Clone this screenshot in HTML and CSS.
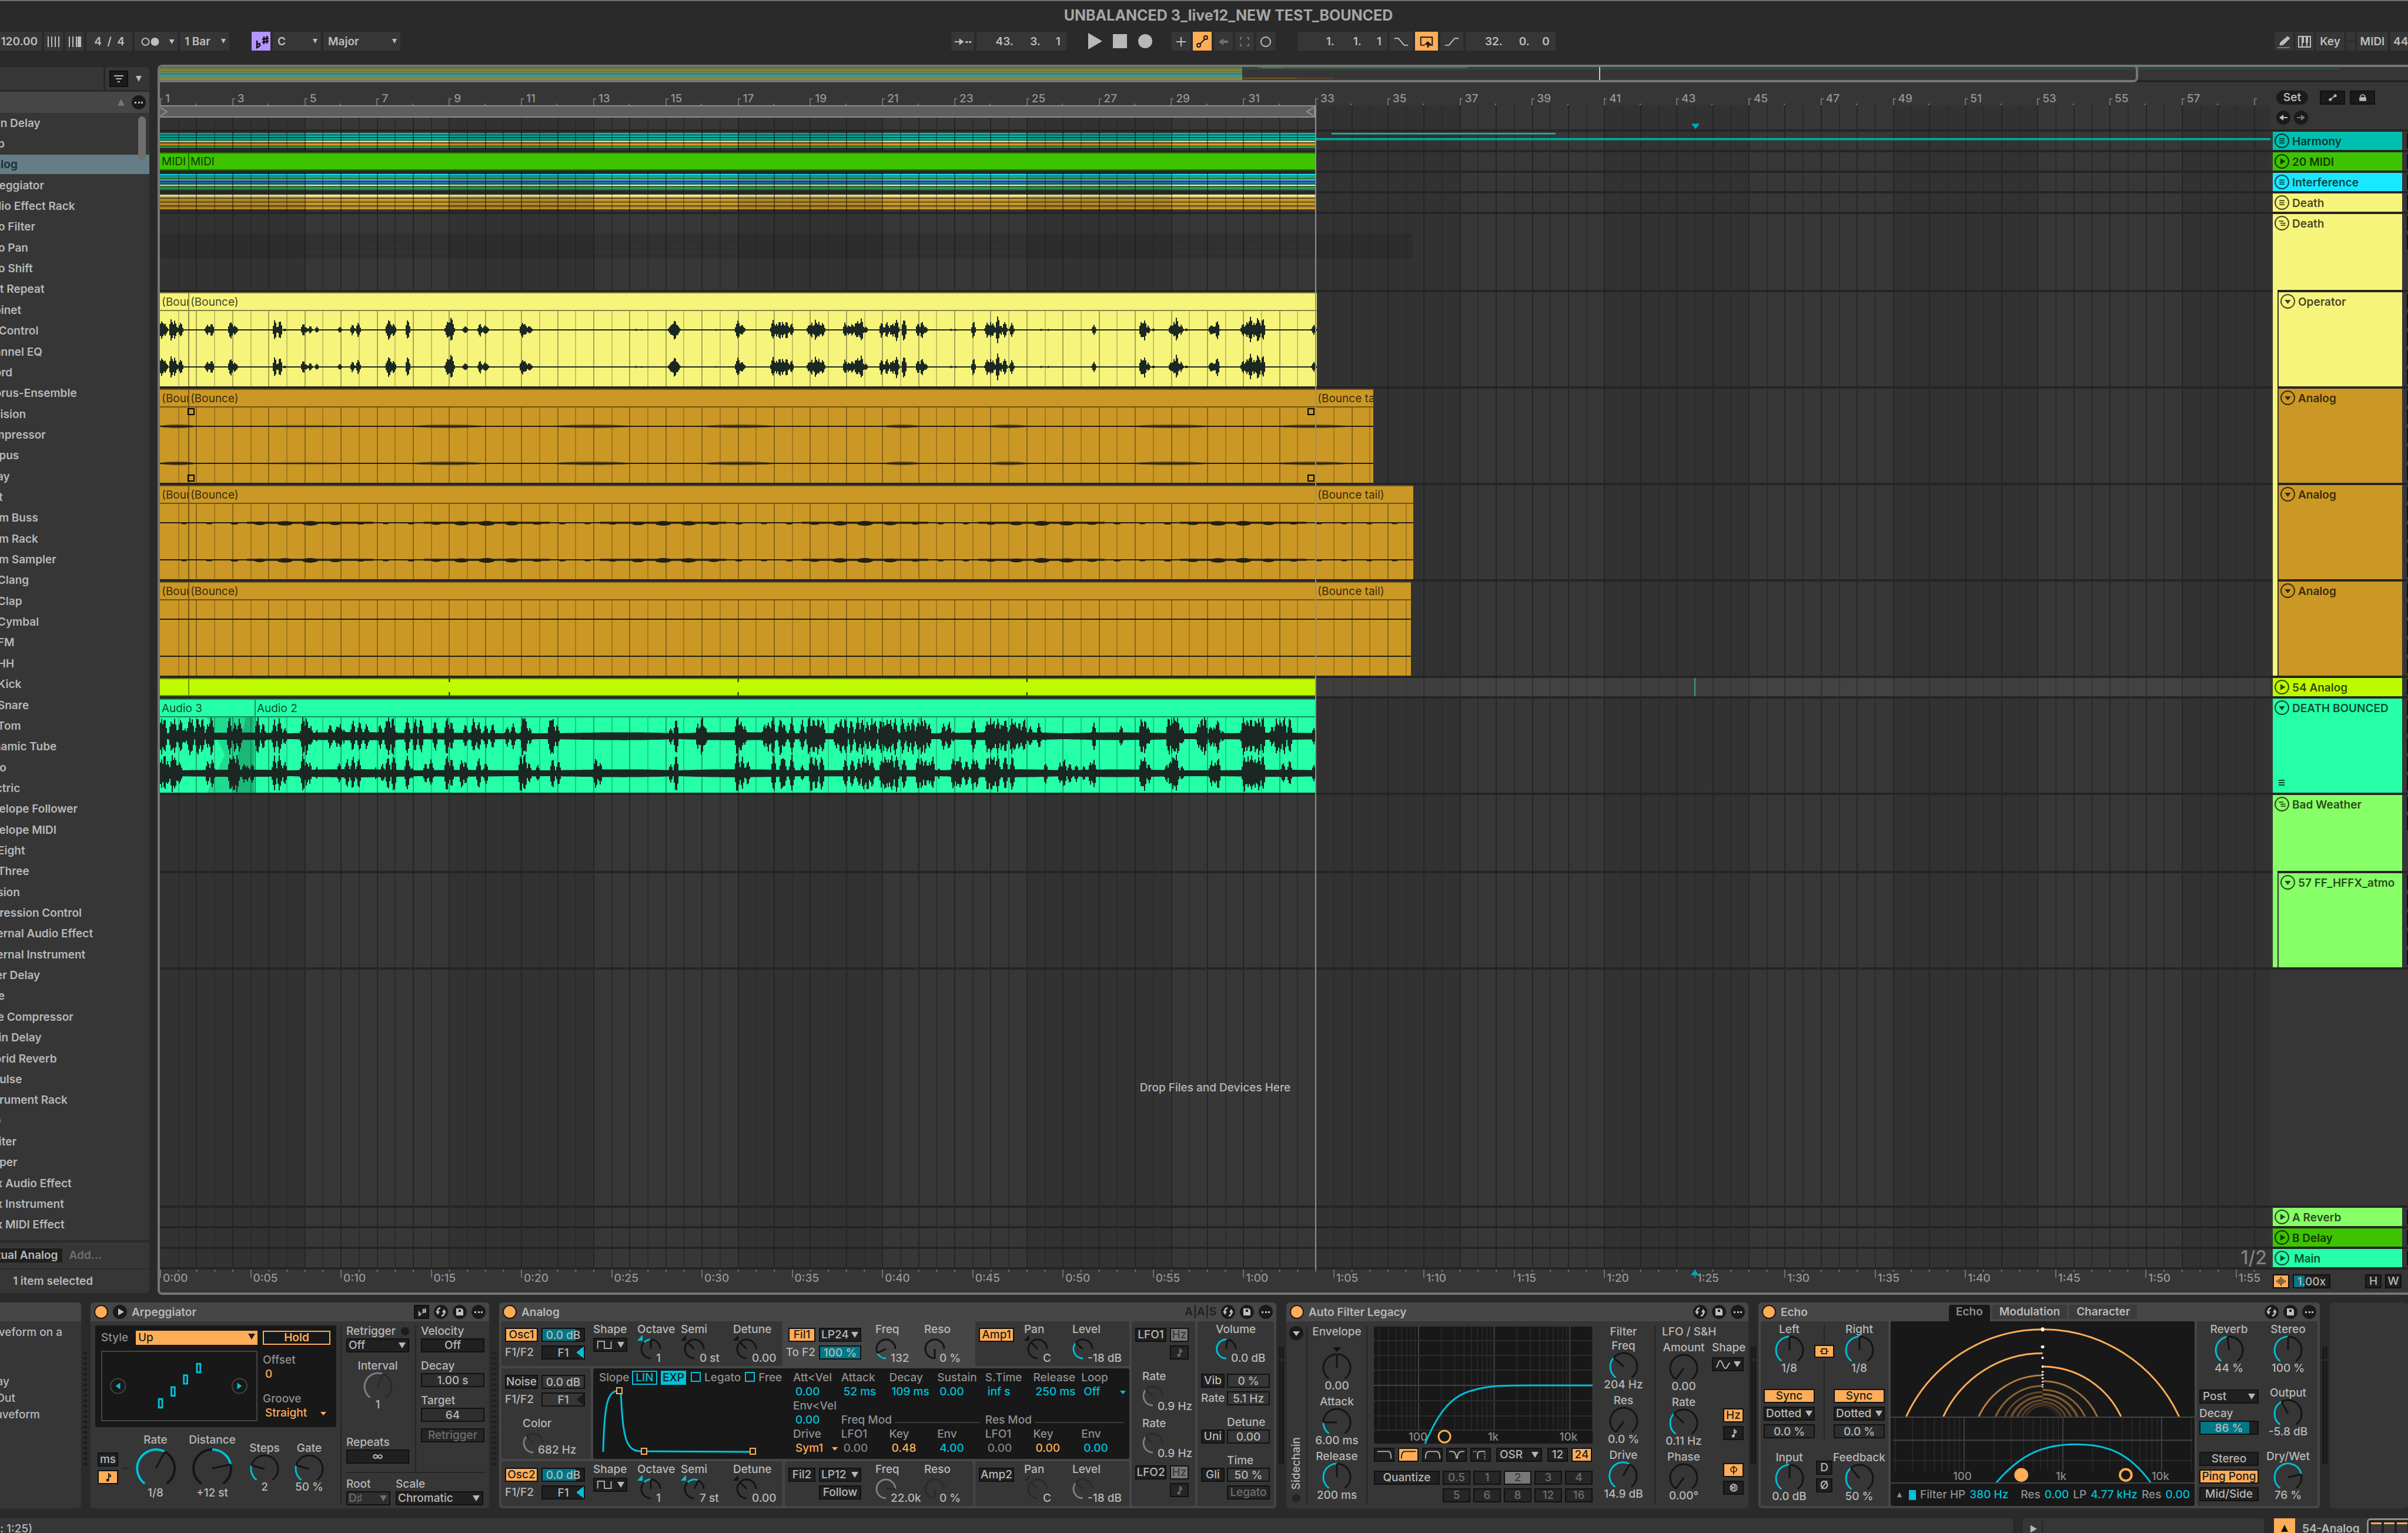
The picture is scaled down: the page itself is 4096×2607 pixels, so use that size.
FILE: index.html
```html
<!DOCTYPE html>
<html lang="en">
<head>
<meta charset="utf-8">
<title>UNBALANCED 3_live12_NEW TEST_BOUNCED</title>
<link rel="stylesheet" href="styles.css">
</head>
<body>
<svg class="defs" aria-hidden="true">
  <symbol id="i-lines" viewBox="0 0 24 24"><path d="M7 8h10M7 12h10M7 16h10" stroke="currentColor" stroke-width="2"/></symbol>
  <symbol id="i-group" viewBox="0 0 24 24"><path d="M6 8h9M9 12h10M10 16h9" stroke="currentColor" stroke-width="2"/></symbol>
  <symbol id="i-right" viewBox="0 0 24 24"><path d="M9 6l10 6-10 6z" fill="currentColor"/></symbol>
  <symbol id="i-down" viewBox="0 0 24 24"><path d="M6 9h12l-6 8z" fill="currentColor"/></symbol>
  <symbol id="i-swap" viewBox="0 0 24 24"><path d="M11 5a7 7 0 0 0-5 8M13 19a7 7 0 0 0 5-8" fill="none" stroke="currentColor" stroke-width="2.5"/><path d="M3 11h7l-3 6zM21 13h-7l3-6z" fill="currentColor"/></symbol>
  <symbol id="i-save" viewBox="0 0 24 24"><path d="M6 6h9l3 3v9H6z" fill="currentColor"/><path d="M10 8h4v4h-4z" fill="#1c1c1c"/></symbol>
  <symbol id="i-more" viewBox="0 0 24 24"><path d="M5 11h3v3H5zM11 11h3v3h-3zM16 11h3v3h-3z" fill="currentColor"/></symbol>
  <symbol id="i-scale" viewBox="0 0 32 32"><path d="M9 14v12c7-3 7-9 0-6M18 12l11-2M18 17l11-2M21 7v13M26 6v13" fill="none" stroke="currentColor" stroke-width="2.5"/></symbol>
  <symbol id="i-note" viewBox="0 0 24 24"><path d="M13 18V5l4 3v3M13 9l4 3" fill="none" stroke="currentColor" stroke-width="2"/><circle cx="11" cy="18" r="3" fill="currentColor"/></symbol>
  <symbol id="i-square" viewBox="0 0 32 20"><path d="M2 17V3h13v14h13V3" fill="none" stroke="currentColor" stroke-width="2"/></symbol>
</svg>

<header class="titlebar"><h1>UNBALANCED 3_live12_NEW TEST_BOUNCED</h1></header>

<nav class="transport">
  <div class="bar bar-left">
    <input class="tb w-tempo" aria-label="Tempo" value="120.00">
    <button class="tb w-s" aria-label="Nudge down"><svg viewBox="0 0 32 32"><path d="M7 7v18M13 7v18M19 7v18M25 7v18" stroke="currentColor" stroke-width="2"/></svg></button>
    <button class="tb w-s" aria-label="Nudge up"><svg viewBox="0 0 32 32"><path d="M7 7v18M13 7v18M19 7v18M24 7v18" stroke="currentColor" stroke-width="2"/><path d="M22 7v18M26 7v18" stroke="currentColor" stroke-width="2"/></svg></button>
    <button class="tb w-sig">4 &nbsp;/ &nbsp;4</button>
    <button class="tb w-met" aria-label="Metronome"><svg class="wide" viewBox="0 0 72 32"><circle cx="18" cy="16" r="6" fill="none" stroke="currentColor" stroke-width="2"/><circle cx="34" cy="16" r="7" fill="currentColor"/><path d="M58 12h9l-4 8z" fill="currentColor"/></svg></button>
    <span class="sel tb-sel w-bar"><select aria-label="Quantization"><option>1 Bar</option></select></span>
    <button class="tb w-s violet" aria-label="Scale mode"><svg viewBox="0 0 32 32"><use href="#i-scale"/></svg></button>
    <span class="sel tb-sel w-root"><select aria-label="Root"><option>C</option></select></span>
    <span class="sel tb-sel w-scale"><select aria-label="Scale"><option>Major</option></select></span>
  </div>
  <div class="bar bar-mid">
    <button class="tb w-m" aria-label="Follow"><svg viewBox="0 0 40 32"><path d="M6 15h8v-5l8 6-8 6v-5H6zM25 15h4v3h-4zM31 15h4v3h-4z" fill="currentColor"/></svg></button>
    <button class="tb w-pos"><span>43.</span><span>3.</span><span>1</span></button>
    <span class="runs">
      <button class="bare" aria-label="Play"><svg viewBox="0 0 28 32"><path d="M3 2v28l24-14z" fill="currentColor"/></svg></button>
      <button class="bare" aria-label="Stop"><svg viewBox="0 0 28 32"><path d="M2 4h24v24H2z" fill="currentColor"/></svg></button>
      <button class="bare" aria-label="Record"><svg viewBox="0 0 28 32"><circle cx="14" cy="16" r="12" fill="currentColor"/></svg></button>
    </span>
    <button class="tb w-s" aria-label="Overdub"><svg viewBox="0 0 32 32"><path d="M16 8v16M8 16h16" stroke="currentColor" stroke-width="2"/></svg></button>
    <button class="tb w-s orange" aria-label="Automation arm"><svg viewBox="0 0 32 32"><path d="M12 20l9-9" stroke="currentColor" stroke-width="2"/><g fill="none" stroke="currentColor" stroke-width="2"><circle cx="10" cy="22" r="3"/><circle cx="22" cy="9" r="3"/></g></svg></button>
    <button class="tb w-s faint" aria-label="Re-enable automation"><svg viewBox="0 0 32 32"><path d="M8 16l8-6v4h8v4h-8v4z" fill="currentColor"/></svg></button>
    <button class="tb w-s faint" aria-label="Capture MIDI"><svg viewBox="0 0 32 32"><path d="M12 9H9v4M20 9h3v4M12 23H9v-4M20 23h3v-4" fill="none" stroke="currentColor" stroke-width="2"/></svg></button>
    <button class="tb w-s" aria-label="Session record"><svg viewBox="0 0 32 32"><circle cx="16" cy="16" r="8" fill="none" stroke="currentColor" stroke-width="2"/></svg></button>
    <button class="tb w-pos gap-l"><span>1.</span><span>1.</span><span>1</span></button>
    <button class="tb w-m" aria-label="Punch in"><svg viewBox="0 0 40 32"><path d="M8 10h7l10 12h7" fill="none" stroke="currentColor" stroke-width="2"/></svg></button>
    <button class="tb w-m orange" aria-label="Loop"><svg viewBox="0 0 40 32"><path d="M17 22h-7V8h20v14h-6" fill="none" stroke="currentColor" stroke-width="2"/><path d="M22 15l7 6h-5v5h-3v-5h-5z" fill="currentColor"/></svg></button>
    <button class="tb w-m" aria-label="Punch out"><svg viewBox="0 0 40 32"><path d="M8 22h7l10-12h7" fill="none" stroke="currentColor" stroke-width="2"/></svg></button>
    <button class="tb w-pos"><span>32.</span><span>0.</span><span>0</span></button>
  </div>
  <div class="bar bar-right">
    <button class="tb w-s" aria-label="Draw mode"><svg viewBox="0 0 32 32"><path d="M5 26h21M9 22l1-5L22 7l4 3-11 11z" fill="currentColor" stroke="currentColor" stroke-width="1"/></svg></button>
    <button class="tb w-s" aria-label="Computer keyboard"><svg viewBox="0 0 32 32"><path d="M6 7h20v18H6zM12 7v18M20 7v18" fill="none" stroke="currentColor" stroke-width="2"/><path d="M11 7h4v11h-4zM18 7h4v11h-4z" fill="currentColor"/></svg></button>
    <button class="tb w-key">Key</button>
    <span class="tb w-io"></span>
    <button class="tb w-midi">MIDI</button>
    <span class="tb w-rate">44.1</span>
  </div>
</nav>

<main class="work">
  <aside class="browser">
    <div class="search"><span class="field"></span><button class="filter" aria-label="Filters"><svg viewBox="0 0 24 24"><path d="M4 7h16M7 12h10M10 17h4" stroke="currentColor" stroke-width="2"/></svg></button><svg class="tri" viewBox="0 0 24 24"><path d="M6 6h12l-6 12z" fill="currentColor"/></svg></div>
    <div class="colhead"><svg class="tri" viewBox="0 0 24 24"><path d="M5 19h14L12 5z" fill="#777"/></svg><button class="round" aria-label="Options"><svg><use href="#i-more"/></svg></button></div>
    <div class="listwrap">
      <ul class="list">
        <li>Align Delay</li><li>Amp</li><li class="on">Analog</li><li>Arpeggiator</li><li>Audio Effect Rack</li><li>Auto Filter</li><li>Auto Pan</li><li>Auto Shift</li><li>Beat Repeat</li><li>Cabinet</li><li>CC Control</li><li>Channel EQ</li><li>Chord</li><li>Chorus-Ensemble</li><li>Collision</li><li>Compressor</li><li>Corpus</li><li>Delay</li><li>Drift</li><li>Drum Buss</li><li>Drum Rack</li><li>Drum Sampler</li><li>DS Clang</li><li>DS Clap</li><li>DS Cymbal</li><li>DS FM</li><li>DS HH</li><li>DS Kick</li><li>DS Snare</li><li>DS Tom</li><li>Dynamic Tube</li><li>Echo</li><li>Electric</li><li>Envelope Follower</li><li>Envelope MIDI</li><li>EQ Eight</li><li>EQ Three</li><li>Erosion</li><li>Expression Control</li><li>External Audio Effect</li><li>External Instrument</li><li>Filter Delay</li><li>Gate</li><li>Glue Compressor</li><li>Grain Delay</li><li>Hybrid Reverb</li><li>Impulse</li><li>Instrument Rack</li><li>LFO</li><li>Limiter</li><li>Looper</li><li>Max Audio Effect</li><li>Max Instrument</li><li>Max MIDI Effect</li>
      </ul>
      <span class="thumb"></span>
    </div>
    <div class="tags"><span class="tag">Virtual Analog</span><span class="add">Add...</span></div>
    <div class="status">1 item selected</div>
  </aside>

  <section class="arranger">
    <div class="overview"><svg id="overview" viewBox="0 0 3824 12" preserveAspectRatio="none"></svg><span class="frame"></span></div>
    <div class="row ruler-row">
      <div class="ruler" id="bars"></div>
      <div class="side tools"><button class="pill">Set</button><button class="flat" aria-label="Automation"><svg viewBox="0 0 24 24"><path d="M7 16l10-8" stroke="currentColor" stroke-width="2"/><circle cx="7" cy="16" r="3" fill="currentColor"/><circle cx="17" cy="8" r="3" fill="currentColor"/></svg></button><button class="flat" aria-label="Lock"><svg viewBox="0 0 24 24"><path d="M5 11h14v8H5z" fill="currentColor"/><path d="M8 11V8q4-4 8 0v3" fill="none" stroke="currentColor" stroke-width="2"/></svg></button></div>
    </div>
    <div class="board">
      <svg class="grid" id="grid" preserveAspectRatio="none"></svg>
      <div class="row scrub">
        <div class="lane"><div class="loop"><svg viewBox="0 0 16 16"><path d="M1 1l11 7-11 7" fill="none" stroke="currentColor" stroke-width="2"/></svg><svg viewBox="0 0 16 16"><path d="M15 1L4 8l11 7" fill="none" stroke="currentColor" stroke-width="2"/></svg></div><svg class="mark" viewBox="0 0 12 8"><path d="M0 0h12L6 8z" fill="currentColor"/></svg></div>
        <div class="side arrows"><button class="round" aria-label="Previous locator"><svg viewBox="0 0 24 24"><path d="M5 12l7-5v4h7v2h-7v4z" fill="currentColor"/></svg></button><button class="round faint" aria-label="Next locator"><svg viewBox="0 0 24 24"><path d="M19 12l-7-5v4H5v2h7v4z" fill="currentColor"/></svg></button></div>
      </div>

      <div class="row small c-teal"><div class="lane"><svg class="stripes" data-stripes="harmony"></svg></div><div class="thead"><button class="fold" aria-label="Fold"><svg><use href="#i-lines"/></svg></button>Harmony</div><i class="stub"></i></div>
      <div class="row small c-green"><div class="lane"><div class="clip" style="--a:1;--b:1.78"><p>MIDI</p></div><div class="clip" style="--a:1.78;--b:33"><p>MIDI</p></div></div><div class="thead"><button class="fold" aria-label="Unfold"><svg><use href="#i-right"/></svg></button>20 MIDI</div><i class="stub"></i></div>
      <div class="row small c-cyan"><div class="lane"><svg class="stripes" data-stripes="interference"></svg></div><div class="thead"><button class="fold" aria-label="Fold"><svg><use href="#i-lines"/></svg></button>Interference</div><i class="stub"></i></div>
      <div class="row small c-yellow"><div class="lane"><svg class="stripes" data-stripes="death"></svg></div><div class="thead"><button class="fold" aria-label="Fold"><svg><use href="#i-lines"/></svg></button>Death</div><i class="stub"></i></div>
      <div class="row group c-yellow"><div class="lane"><div class="ghost"></div></div><div class="thead"><button class="fold" aria-label="Fold"><svg><use href="#i-group"/></svg></button>Death</div><i class="stub"></i></div>
      <div class="row big c-yellow"><div class="lane"><div class="clip" style="--a:1;--b:1.78"><p>(Bounce)</p></div><div class="clip" style="--a:1.78;--b:33.04"><p>(Bounce)</p></div><svg class="wave" data-wave="operator" data-end="33.04"></svg></div><i class="rail c-yellow"></i><div class="thead"><button class="fold" aria-label="Unfold"><svg><use href="#i-down"/></svg></button>Operator</div><i class="stub"></i></div>
      <div class="row big c-ochre"><div class="lane"><div class="clip" style="--a:1;--b:1.78"><p>(Bounce)</p></div><div class="clip" style="--a:1.78;--b:33"><p>(Bounce)</p></div><div class="clip" style="--a:33;--b:34.61"><p>(Bounce tail)</p></div><svg class="wave" data-wave="pad" data-end="34.61"></svg></div><i class="rail c-yellow"></i><div class="thead"><button class="fold" aria-label="Unfold"><svg><use href="#i-down"/></svg></button>Analog</div><i class="stub"></i></div>
      <div class="row big c-ochre"><div class="lane"><div class="clip" style="--a:1;--b:1.78"><p>(Bounce)</p></div><div class="clip" style="--a:1.78;--b:33"><p>(Bounce)</p></div><div class="clip" style="--a:33;--b:35.71"><p>(Bounce tail)</p></div><svg class="wave" data-wave="pulse" data-end="35.71"></svg></div><i class="rail c-yellow"></i><div class="thead"><button class="fold" aria-label="Unfold"><svg><use href="#i-down"/></svg></button>Analog</div><i class="stub"></i></div>
      <div class="row big c-ochre"><div class="lane"><div class="clip" style="--a:1;--b:1.78"><p>(Bounce)</p></div><div class="clip" style="--a:1.78;--b:33"><p>(Bounce)</p></div><div class="clip" style="--a:33;--b:35.65"><p>(Bounce tail)</p></div><svg class="wave" data-wave="flat" data-end="35.65"></svg></div><i class="rail c-yellow last"></i><div class="thead"><button class="fold" aria-label="Unfold"><svg><use href="#i-down"/></svg></button>Analog</div><i class="stub"></i></div>
      <div class="row small c-lime selected"><div class="lane"><div class="clip" style="--a:1;--b:1.78"></div><div class="clip" style="--a:1.78;--b:33"></div><svg class="wave ticks" data-wave="ticks" data-end="33"></svg><span class="cursor"></span></div><div class="thead"><button class="fold" aria-label="Unfold"><svg><use href="#i-right"/></svg></button>54 Analog</div><i class="stub"></i></div>
      <div class="row big c-mint"><div class="lane"><div class="clip" style="--a:1;--b:3.62"><p>Audio 3</p></div><div class="clip" style="--a:3.62;--b:33"><p>Audio 2</p></div><svg class="wave" data-wave="bounced" data-end="33"></svg></div><div class="thead"><button class="fold" aria-label="Unfold"><svg><use href="#i-down"/></svg></button>DEATH BOUNCED<svg class="corner"><use href="#i-lines"/></svg></div><i class="stub"></i></div>
      <div class="row group c-leaf"><div class="lane"></div><div class="thead"><button class="fold" aria-label="Fold"><svg><use href="#i-group"/></svg></button>Bad Weather</div><i class="stub"></i></div>
      <div class="row big c-leaf"><div class="lane"></div><i class="rail c-leaf last"></i><div class="thead"><button class="fold" aria-label="Unfold"><svg><use href="#i-down"/></svg></button>57 FF_HFFX_atmo</div><i class="stub"></i></div>
      <div class="row drop"><div class="lane">Drop Files and Devices Here</div><div class="side"></div></div>
      <div class="row small c-leaf"><div class="lane"></div><div class="thead"><button class="fold" aria-label="Unfold"><svg><use href="#i-right"/></svg></button>A Reverb</div><i class="stub"></i></div>
      <div class="row small c-green"><div class="lane"></div><div class="thead"><button class="fold" aria-label="Unfold"><svg><use href="#i-right"/></svg></button>B Delay</div><i class="stub"></i></div>
      <div class="row small c-mint"><div class="lane"><span class="zoomlabel">1/2</span></div><div class="thead"><button class="fold" aria-label="Unfold"><svg><use href="#i-right"/></svg></button>&thinsp;Main</div><i class="stub"></i></div>
      <span class="endline"></span>
    </div>
    <div class="row time-row">
      <div class="times" id="times"></div>
      <svg class="mark foot" viewBox="0 0 12 8"><path d="M0 8h12L6 0z" fill="currentColor"/></svg>
      <div class="side speed"><button class="box on" aria-label="Waveform zoom"><svg viewBox="0 0 24 24"><path d="M4 10v4M8 7v10M12 3v18M16 7v10M20 10v4" stroke="currentColor" stroke-width="2"/></svg></button><input class="num w-60 p30" aria-label="Vertical zoom" value="1.00x"><span class="grow"></span><button class="box">H</button><button class="box">W</button></div>
    </div>
  </section>
</main>

<section class="devices">
  <aside class="info"><div class="dhead"></div><p>Choose the waveform on a</p><p class="l2">Delay</p><p>Osc Out</p><p>the waveform</p></aside>
  <i class="dots"></i>

  <article class="device arp">
    <div class="dhead"><button class="power" aria-label="Device on"></button><button class="round" aria-label="Fold"><svg><use href="#i-right"/></svg></button><h2>Arpeggiator</h2><button class="sq" aria-label="Use scale"><svg viewBox="0 0 32 32"><use href="#i-scale"/></svg></button><button class="round" aria-label="Hot-swap"><svg><use href="#i-swap"/></svg></button><button class="round" aria-label="Save"><svg><use href="#i-save"/></svg></button><button class="round" aria-label="More"><svg><use href="#i-more"/></svg></button></div>
    <div class="arp-body">
      <div class="arp-main">
        <div class="screen arp-screen">
          <label for="style">Style</label><span class="sel hot"><select id="style"><option>Up</option></select></span><button class="hold">Hold</button>
          <svg class="steps" viewBox="0 0 266 120"><g fill="none" stroke="#444" stroke-width="2"><circle cx="25" cy="60" r="13"/><circle cx="239" cy="60" r="13"/></g><path d="M29 54v12l-8-6zM235 54v12l8-6z" fill="#00c0d8"/><path d="M97 83h6v15h-6zM119 62h6v15h-6zM141 41h6v15h-6zM164 21h6v15h-6z" fill="none" stroke="#00c0d8" stroke-width="3"/></svg>
          <div class="arp-side"><span>Offset</span><b>0</b><span class="mt">Groove</span><span class="sel clear"><select aria-label="Groove"><option>Straight</option></select></span></div>
        </div>
        <div class="arp-knobs">
          <div class="stack"><button class="box">ms</button><button class="box on" aria-label="Synced"><svg><use href="#i-note"/></svg></button></div>
          <i class="dash"></i>
          <label class="knob large"><span>Rate</span><span class="dial" data-v=".6"></span><span>1/8</span></label>
          <label class="knob large link"><span>Distance</span><span class="dial" data-v=".77" data-o=".5"></span><span>+12 st</span></label>
          <label class="knob low"><span>Steps</span><span class="dial" data-v=".24"></span><span>2</span></label>
          <label class="knob low"><span>Gate</span><span class="dial" data-v=".24"></span><span>50 %</span></label>
        </div>
      </div>
      <div class="arp-right">
        <div class="arp-col line-r">
          <label for="retrig" class="dotted">Retrigger</label><span class="sel"><select id="retrig"><option>Off</option></select></span>
          <label class="knob dim interval"><span>Interval</span><span class="dial" data-v=".57"></span><span>1</span></label>
          <span class="rep">Repeats</span><button class="box">∞</button>
        </div>
        <div class="arp-col">
          <span>Velocity</span><button class="box">Off</button>
          <label for="decay" class="sp">Decay</label><input class="num" id="decay" value="1.00 s">
          <label for="target" class="sp">Target</label><input class="num" id="target" value="64">
          <button class="box mute sp2">Retrigger</button>
        </div>
        <div class="arp-scale">
          <label>Root<span class="sel mute w-75"><select><option>D♯</option></select></span></label>
          <label>Scale<span class="sel w-150"><select><option>Chromatic</option></select></span></label>
        </div>
      </div>
    </div>
  </article>
  <i class="gap"></i>

  <article class="device analog">
    <div class="dhead"><button class="power" aria-label="Device on"></button><h2>Analog</h2><span class="aas">A|A|S</span><button class="round" aria-label="Hot-swap"><svg><use href="#i-swap"/></svg></button><button class="round" aria-label="Save"><svg><use href="#i-save"/></svg></button><button class="round" aria-label="More"><svg><use href="#i-more"/></svg></button></div>
    <div class="an-grid">
      <div class="panel osc">
        <div class="pair w-osc"><button class="box on">Osc1</button><input class="num p80" aria-label="Osc1 level" value="0.0 dB"><span>F1/F2</span><input class="num slide" aria-label="Osc1 F1/F2" value="F1"></div>
        <div class="shape"><span>Shape</span><button class="box shapebtn" aria-label="Square"><svg class="sqw"><use href="#i-square"/></svg><i class="caret"></i></button></div>
        <label class="mini k1"><span>Octave</span><span class="dial" data-v=".667" data-o=".5" data-tri="cyan"></span><span>1</span></label>
        <label class="mini k2"><span>Semi</span><span class="dial" data-v=".5" data-o=".5" data-tri="dark"></span><span>0 st</span></label>
        <label class="mini k3"><span>Detune</span><span class="dial" data-v=".5" data-o=".5" data-tri="dark"></span><span>0.00</span></label>
      </div>
      <div class="panel fil lit">
        <div class="pair w-fil"><button class="box on">Fil1</button><span class="sel"><select aria-label="Fil1 type"><option>LP24</option></select></span><span class="r">To F2</span><input class="num p100" aria-label="To F2" value="100 %"></div>
        <label class="mini k4"><span>Freq</span><span class="dial" data-v=".24"></span><span>132</span></label>
        <label class="mini k5"><span>Reso</span><span class="dial" data-v="0"></span><span>0 %</span></label>
      </div>
      <div class="panel amp">
        <div class="pair w-amp"><button class="box on">Amp1</button></div>
        <label class="mini k6"><span>Pan</span><span class="dial" data-v=".5" data-o=".5" data-tri="dark"></span><span>C</span></label>
        <label class="mini k7"><span>Level</span><span class="dial" data-v=".48"></span><span>-18 dB</span></label>
      </div>
      <div class="panel noise">
        <div class="pair w-osc"><button class="box">Noise</button><input class="num plain" aria-label="Noise level" value="0.0 dB"><span>F1/F2</span><input class="num plain slide-off" aria-label="Noise F1/F2" value="F1"></div>
        <label class="mini dim color"><span>Color</span><span class="dial" data-v=".5"></span><span>682 Hz</span></label>
      </div>
      <div class="screen an-screen">
        <div class="env">
          <div class="slope"><span>Slope</span><button class="lin">LIN</button><button class="lin exp">EXP</button><label><input type="checkbox">Legato</label><label><input type="checkbox">Free</label></div>
          <svg viewBox="0 0 330 122" class="envsvg"><path d="M17 112C19 30 24 8 44 8h3C50 90 56 111 82 111L271 112" fill="none" stroke="#00c0d8" stroke-width="3"/><path d="M40 3h9v10h-9zM82 106h9v10h-9zM267 106h9v10h-9z" fill="#181818" stroke="#ffad56" stroke-width="2"/></svg>
        </div>
        <div class="params">
          <span>Att&lt;Vel</span><span>Attack</span><span>Decay</span><span>Sustain</span><span>S.Time</span><span>Release</span><span>Loop</span>
          <b>0.00</b><b>52 ms</b><b>109 ms</b><b>0.00</b><b>inf s</b><b>250 ms</b><b class="dd">Off</b>
          <span class="full">Env&lt;Vel</span>
          <b>0.00</b><span class="rule3">Freq Mod</span><span class="rule3">Res Mod</span>
          <span>Drive</span><span>LFO1</span><span>Key</span><span>Env</span><span>LFO1</span><span>Key</span><span>Env</span>
          <b class="o dd">Sym1</b><b class="g">0.00</b><b class="o">0.48</b><b>4.00</b><b class="g">0.00</b><b class="o">0.00</b><b>0.00</b>
        </div>
      </div>
      <div class="panel osc">
        <div class="pair w-osc"><button class="box on">Osc2</button><input class="num p80" aria-label="Osc2 level" value="0.0 dB"><span>F1/F2</span><input class="num slide" aria-label="Osc2 F1/F2" value="F1"></div>
        <div class="shape"><span>Shape</span><button class="box shapebtn" aria-label="Square"><svg class="sqw"><use href="#i-square"/></svg><i class="caret"></i></button></div>
        <label class="mini k1"><span>Octave</span><span class="dial" data-v=".667" data-o=".5" data-tri="cyan"></span><span>1</span></label>
        <label class="mini k2"><span>Semi</span><span class="dial" data-v=".76" data-o=".5" data-tri="cyan"></span><span>7 st</span></label>
        <label class="mini k3"><span>Detune</span><span class="dial" data-v=".5" data-o=".5" data-tri="dark"></span><span>0.00</span></label>
      </div>
      <div class="panel fil">
        <div class="pair w-fil"><button class="box">Fil2</button><span class="sel"><select aria-label="Fil2 type"><option>LP12</option></select></span><span></span><button class="box">Follow</button></div>
        <label class="mini k4 dim"><span>Freq</span><span class="dial" data-v="1"></span><span>22.0k</span></label>
        <label class="mini k5 dim"><span>Reso</span><span class="dial" data-v="0"></span><span>0 %</span></label>
      </div>
      <div class="panel amp">
        <div class="pair w-amp"><button class="box">Amp2</button></div>
        <label class="mini k6 dim"><span>Pan</span><span class="dial" data-v=".5" data-o=".5" data-tri="dim"></span><span>C</span></label>
        <label class="mini k7 dim"><span>Level</span><span class="dial" data-v=".48"></span><span>-18 dB</span></label>
      </div>
      <div class="panel lfo">
        <div class="pair w-lfo"><button class="box">LFO1</button><button class="box gray">Hz</button><span></span><button class="box mute" aria-label="Synced"><svg><use href="#i-note"/></svg></button></div>
        <div class="rates"><label class="mini dim"><span>Rate</span><span class="dial" data-v=".48"></span><span>0.9 Hz</span></label>
        <label class="mini dim"><span>Rate</span><span class="dial" data-v=".48"></span><span>0.9 Hz</span></label></div>
        <div class="pair w-lfo"><button class="box">LFO2</button><button class="box gray">Hz</button><span></span><button class="box mute" aria-label="Synced"><svg><use href="#i-note"/></svg></button></div>
      </div>
      <div class="panel vol">
        <label class="mini k8"><span>Volume</span><span class="dial" data-v=".685"></span><span>0.0 dB</span></label>
        <div class="pair w-vol v1"><button class="box">Vib</button><input class="num plain" aria-label="Vibrato" value="0 %"><label for="vr">Rate</label><input class="num plain" id="vr" value="5.1 Hz"></div>
        <div class="pair w-vol v2"><span></span><label for="un">Detune</label><button class="box">Uni</button><input class="num plain" id="un" value="0.00"></div>
        <div class="pair w-vol v3"><span></span><label for="gl">Time</label><button class="box">Gli</button><input class="num plain" id="gl" value="50 %"><span></span><button class="box mute legato">Legato</button></div>
      </div>
    </div>
  </article>
  <i class="meter"></i>

  <article class="device autof">
    <div class="dhead"><button class="power" aria-label="Device on"></button><h2>Auto Filter Legacy</h2><button class="round" aria-label="Hot-swap"><svg><use href="#i-swap"/></svg></button><button class="round" aria-label="Save"><svg><use href="#i-save"/></svg></button><button class="round" aria-label="More"><svg><use href="#i-more"/></svg></button></div>
    <div class="af-grid">
      <div class="af-side"><button class="round" aria-label="Unfold"><svg><use href="#i-down"/></svg></button><span class="vert">Sidechain</span><i class="led"></i></div>
      <div class="kcol"><span>Envelope</span><i class="pointer"></i><label class="knob bare-top"><span class="dial" data-v=".5" data-o=".5"></span><span>0.00</span></label><label class="knob"><span>Attack</span><span class="dial" data-v=".19"></span><span>6.00 ms</span></label><label class="knob"><span>Release</span><span class="dial" data-v=".5"></span><span>200 ms</span></label></div>
      <div class="af-mid">
        <svg class="curve" id="afcurve" viewBox="0 0 372 199"></svg>
        <div class="af-btns"><button class="box" aria-label="Lowpass"><svg viewBox="0 0 32 20"><path d="M3 4h20q5 0 5 13" fill="none" stroke="currentColor" stroke-width="2"/></svg></button><button class="box on" aria-label="Highpass"><svg viewBox="0 0 32 20"><path d="M3 17Q3 4 9 4h20" fill="none" stroke="currentColor" stroke-width="2"/></svg></button><button class="box" aria-label="Bandpass"><svg viewBox="0 0 32 20"><path d="M3 17Q3 4 9 4h14q6 0 6 13" fill="none" stroke="currentColor" stroke-width="2"/></svg></button><button class="box" aria-label="Notch"><svg viewBox="0 0 32 20"><path d="M2 4h5q8 0 8 13M30 4h-5q-8 0-8 13" fill="none" stroke="currentColor" stroke-width="2"/></svg></button><button class="box" aria-label="Morph"><svg viewBox="0 0 32 20"><path d="M10 17V9q0-5 5-5h8" fill="none" stroke="currentColor" stroke-width="2"/><path d="M2 4h8M23 4v14" stroke="currentColor" stroke-width="2" stroke-dasharray="2 2"/></svg></button><span class="sel osr"><select aria-label="Circuit"><option>OSR</option></select></span><button class="box">12</button><button class="box on">24</button></div>
        <div class="quant"><button class="box q">Quantize</button><button class="box mute">0.5</button><button class="box mute">1</button><button class="box gray">2</button><button class="box mute">3</button><button class="box mute">4</button><span></span><button class="box mute">5</button><button class="box mute">6</button><button class="box mute">8</button><button class="box mute">12</button><button class="box mute">16</button></div>
      </div>
      <div class="kcol fcol"><span class="t4">Filter</span><label class="knob"><span>Freq</span><span class="dial" data-v=".33"></span><span>204 Hz</span></label><label class="knob"><span>Res</span><span class="dial" data-v="0"></span><span>0.0 %</span></label><label class="knob"><span>Drive</span><span class="dial" data-v=".6"></span><span>14.9 dB</span></label></div>
      <div class="lcol"><span class="lt">LFO / S&amp;H</span>
        <label class="knob"><span>Amount</span><span class="dial" data-v="0"></span><span>0.00</span></label>
        <div class="lr"><span>Shape</span><button class="box wv" aria-label="Sine"><svg viewBox="0 0 28 20"><path d="M2 15C6 15 5 4 9 4s5 13 9 13 4-9 8-9" fill="none" stroke="currentColor" stroke-width="2"/></svg><i class="caret"></i></button></div>
        <label class="knob"><span>Rate</span><span class="dial" data-v=".34"></span><span>0.11 Hz</span></label>
        <div class="lr low"><button class="box on">Hz</button><button class="box" aria-label="Synced"><svg><use href="#i-note"/></svg></button></div>
        <label class="knob"><span>Phase</span><span class="dial" data-v="0"></span><span>0.00°</span></label>
        <div class="lr low"><button class="box on" aria-label="Phase"><svg viewBox="0 0 24 24"><ellipse cx="12" cy="11" rx="6" ry="5" fill="none" stroke="currentColor" stroke-width="2"/><path d="M12 3v18" stroke="currentColor" stroke-width="2"/></svg></button><button class="box" aria-label="Spin"><svg viewBox="0 0 24 24"><circle cx="12" cy="12" r="7" fill="none" stroke="currentColor" stroke-width="2"/><path d="M12 5q6 7 0 14M8 9v6l4-3z" fill="none" stroke="currentColor" stroke-width="2"/></svg></button></div>
      </div>
    </div>
  </article>
  <i class="meter"></i>

  <article class="device echo">
    <div class="dhead"><button class="power" aria-label="Device on"></button><h2>Echo</h2><div class="tabs"><button class="tab sel-tab">Echo</button><button class="tab">Modulation</button><button class="tab">Character</button></div><button class="round" aria-label="Hot-swap"><svg><use href="#i-swap"/></svg></button><button class="round" aria-label="Save"><svg><use href="#i-save"/></svg></button><button class="round" aria-label="More"><svg><use href="#i-more"/></svg></button></div>
    <div class="echo-grid">
      <div class="panel e-left">
        <div class="ecol"><label class="knob"><span>Left</span><span class="dial" data-v=".5"></span><span>1/8</span></label>
          <div class="tri3"><button class="box on">Sync</button><span class="sel tight"><select aria-label="Left mode"><option>Dotted</option></select></span><input class="num" aria-label="Left offset" value="0.0 %"></div>
          <label class="knob"><span>Input</span><span class="dial" data-v=".5"></span><span>0.0 dB</span></label></div>
        <div class="emid"><i class="vl a"></i><button class="box on chain" aria-label="Link"><svg viewBox="0 0 24 16"><path d="M3 8h6M15 8h6M7 3h10v10H7z" fill="none" stroke="currentColor" stroke-width="2"/></svg></button><i class="vl b"></i><button class="box d1">D</button><button class="box">Ø</button></div>
        <div class="ecol"><label class="knob"><span>Right</span><span class="dial" data-v=".5"></span><span>1/8</span></label>
          <div class="tri3"><button class="box on">Sync</button><span class="sel tight"><select aria-label="Right mode"><option>Dotted</option></select></span><input class="num" aria-label="Right offset" value="0.0 %"></div>
          <label class="knob"><span>Feedback</span><span class="dial" data-v=".36"></span><span>50 %</span></label></div>
      </div>
      <div class="screen e-screen">
        <svg class="arcs" id="arcs" viewBox="0 0 518 164"></svg>
        <svg class="eq" id="eq" viewBox="0 0 518 112"></svg>
        <div class="e-foot"><svg class="up" viewBox="0 0 14 14"><path d="M1 13h12L7 1z" fill="currentColor"/></svg><i class="cy"></i><span>Filter HP</span><b>380 Hz</b><span class="m">Res</span><b>0.00</b><span>LP</span><b>4.77 kHz</b><span>Res</span><b>0.00</b></div>
      </div>
      <div class="panel e-right">
        <div class="rcol"><label class="knob"><span>Reverb</span><span class="dial" data-v=".47"></span><span>44 %</span></label>
          <span class="sel post"><select aria-label="Reverb position"><option>Post</option></select></span><label for="rdec" class="dec">Decay</label><input class="num p86" id="rdec" value="86 %">
          <div class="tri3 modes"><button class="box">Stereo</button><button class="box on">Ping Pong</button><button class="box">Mid/Side</button></div></div>
        <div class="rcol2"><label class="knob"><span>Stereo</span><span class="dial" data-v=".5"></span><span>100 %</span></label><label class="knob"><span>Output</span><span class="dial" data-v=".4"></span><span>-5.8 dB</span></label><label class="knob"><span>Dry/Wet</span><span class="dial" data-v=".77"></span><span>76 %</span></label></div>
      </div>
    </div>
  </article>
  <i class="meter"></i>
  <div class="device rest"></div>
</section>

<footer class="bottom">
  <div class="hint">(Time: 1:25)</div>
  <div class="mini-panel"><svg viewBox="0 0 24 24"><use href="#i-right"/></svg></div>
  <div class="chainbar"><button class="up-tab" aria-label="Show devices"><svg viewBox="0 0 14 14"><path d="M1 13h12L7 1z" fill="currentColor"/></svg></button><span>54-Analog</span><i class="thumbs"><i></i><i></i><i></i></i></div>
</footer>
<script src="script.js"></script>
</body>
</html>
```

FILE: styles.css
```css
:root {
  --bg: #2a2a2a;
  --panel: #363636;
  --head: #464646;
  --text: #b8b8b8;
  --orange: #ffad56;
  --cyan: #00c0d8;
  --sep: #252525;
  --frame: #757575;
  --bars: 58.46;
}
* { box-sizing: border-box; }
html, body { height: 100%; }
body {
  margin: 0;
  display: flex;
  flex-direction: column;
  overflow: hidden;
  background: var(--bg);
  border-top: 2px solid #6c6c6c;
  color: var(--text);
  font: 500 19px/20px Inter, "Liberation Sans", sans-serif;
}
button, input, select { font: inherit; color: inherit; margin: 0; padding: 0; border: 0; border-radius: 0; background: none; outline: 0; }
select { appearance: none; width: 100%; height: 100%; }
h1, h2, p, ul { margin: 0; padding: 0; font: inherit; }
i { font-style: normal; }
b { font-weight: 500; }
.defs { position: absolute; width: 0; height: 0; }

/* title and transport */
.titlebar { height: 52px; flex: none; text-align: center; padding: 10px 0 0 83px; }
h1 { font-size: 25px; line-height: 28px; font-weight: 700; color: #a6a6a6; }
.transport { flex: none; height: 56px; display: flex; align-items: flex-start; font-weight: 600; }
.bar { display: flex; gap: 4px; }
.bar-left { width: 39.5%; }
.bar-mid { flex: 1; }
.bar-right { width: 227px; gap: 3px; overflow: hidden; }
.tb { height: 32px; background: var(--panel); flex: none; display: flex; align-items: center; justify-content: center; white-space: pre; color: #bdbdbd; padding-top: 1px; }
.tb svg { width: 100%; height: 32px; display: block; }
.w-tempo { width: 71px; text-align: right; padding-right: 7px; }
.w-s { width: 32px; }
.w-m { width: 39px; }
.w-sig { width: 78px; }
.w-met { width: 73px; }
.w-bar { width: 84px; margin-right: 34px; }
.w-root { width: 82px; }
.w-scale { width: 131px; }
.w-pos { width: 153px; justify-content: flex-end; padding-right: 10px; }
.w-pos span { width: 46px; text-align: right; }
.w-pos span:last-child { width: 34px; }
.gap-l { margin-left: 34px; }
.w-key { width: 49px; }
.w-io { width: 15px; background: linear-gradient(var(--panel) 47%, var(--bg) 47% 53%, var(--panel) 53%); }
.w-midi { width: 53px; }
.w-rate { width: 60px; margin-left: 1px; justify-content: flex-start; padding-left: 5px; }
.runs { display: flex; gap: 15px; padding: 0 27px 0 30px; }
.bare { width: 28px; height: 32px; color: #b8b8b8; }
.tb.orange { background: var(--orange); color: #1a1a1a; }
.tb.violet { background: #b595ff; color: #111; }
.faint { color: #707070; }
.tb-sel { height: 32px; flex: none; color: #bdbdbd; }
.tb-sel.sel { background: var(--panel); border: 0; height: 32px; }
.tb-sel select { padding: 2px 0 0 8px; line-height: 30px; }
.tb-sel.sel::after { border-width: 8px 4px 0; right: 6px; top: 12px; }

/* work area */
.work { flex: 1; min-height: 0; display: flex; gap: 14px; }
.browser { width: 254px; flex: none; display: flex; flex-direction: column; padding-top: 4px; font-weight: 600; }
.search { height: 39px; display: flex; align-items: center; background: var(--panel); border-radius: 0 6px 0 0; }
.field { flex: 1; height: 100%; border-right: 3px solid var(--sep); }
.filter { width: 32px; height: 28px; background: #1b1b1b; border: 2px solid #0f0f0f; margin-left: 7px; }
.filter svg { width: 24px; height: 24px; display: block; margin: 0 2px; }
.tri { width: 20px; height: 20px; margin: 0 8px 0 8px; }
.colhead { height: 36px; margin-top: 3px; display: flex; align-items: center; justify-content: flex-end; background: var(--head); padding-right: 6px; }
.listwrap { flex: 1; min-height: 0; position: relative; background: var(--panel); padding-bottom: 8px; overflow: hidden; }
.list { list-style: none; height: 100%; display: grid; grid-auto-rows: 1fr; }
.list li { display: flex; align-items: center; padding-left: 34px; margin-left: -69px; min-height: 0; white-space: nowrap; }
.list .on { background: #647d87; color: #202a2e; box-shadow: inset 0 -2px var(--panel); }
.thumb { position: absolute; right: 6px; top: 6px; width: 13px; height: 74px; border-radius: 7px; background: #6e6e6e; }
.tags { height: 44px; margin-top: 4px; background: var(--panel); display: flex; align-items: center; gap: 11px; white-space: nowrap; }
.tag { background: #1f1f1f; padding: 2px 8px; margin-left: -40px; }
.add { color: #6e6e6e; }
.status { height: 40px; margin-top: 2px; background: var(--panel); border-radius: 0 0 6px 0; padding: 10px 22px; margin-bottom: 3px; }

/* arranger */
.arranger { flex: 1; min-width: 0; display: flex; flex-direction: column; background: var(--panel); border-left: 4px solid var(--frame); border-bottom: 4px solid var(--frame); border-radius: 8px 0 0 8px; overflow: hidden; }
.overview { height: 30px; flex: none; position: relative; border-top: 4px solid var(--frame); border-bottom: 4px solid var(--sep); }
.overview svg { width: 100%; height: 22px; display: block; }
.frame { position: absolute; left: 0; top: -4px; width: 88%; height: 30px; border: 4px solid var(--frame); border-left: 0; border-radius: 0 8px 8px 0; }
.row { display: flex; flex: none; }
.ruler-row { height: 39px; }
.ruler, .times { flex: 1; min-width: 0; display: flex; overflow: hidden; color: #979797; }
.side { width: 234px; flex: none; }
.ruler span { flex: none; width: calc(200% / var(--bars)); height: 39px; padding: 18px 0 0 9px; background: linear-gradient(#707070, #707070) 0 100% / 2px 12px no-repeat, linear-gradient(#707070, #707070) 0 27px / 5px 2px no-repeat, linear-gradient(#707070, #707070) 50% 100% / 2px 3px no-repeat; }
.times span { flex: none; width: calc(250% / var(--bars)); height: 39px; padding: 5px 0 0 5px; background: linear-gradient(#707070, #707070) 0 0 / 2px 14px no-repeat, linear-gradient(90deg, #707070 2px, transparent 2px) 0 0 / 20% 4px repeat-x; }
.tools { display: flex; padding: 14px 0 0 10px; font-weight: 600; }
.pill { width: 54px; height: 24px; border-radius: 12px; background: #1b1b1b; margin-right: 20px; }
.flat { width: 43px; height: 24px; background: #1b1b1b; border: 2px solid #111; margin-right: 8px; }
.flat svg { width: 20px; height: 20px; display: block; margin: 0 auto; }
.round { width: 24px; height: 24px; flex: none; border-radius: 50%; background: #1a1a1a; color: #c0c0c0; }
.round svg { width: 24px; height: 24px; display: block; }
.arrows { display: flex; gap: 6px; padding: 9px 0 0 10px; background: var(--panel); }
.round.faint { color: #777; }

.board { flex: 1; min-height: 0; position: relative; display: flex; flex-direction: column; }
.grid { position: absolute; left: 0; top: 0; width: calc(100% - 234px); height: 100%; }
.board .row { position: relative; border-bottom: 4px solid var(--sep); }
.scrub { height: 45px; }
.small { height: 35px; }
.group { height: 133px; }
.big { height: 164px; }
.drop { flex: 1 !important; }
.lane { flex: 1; min-width: 0; position: relative; margin-right: 4px; }
.scrub .lane, .drop .lane { margin-right: 0; }
.drop .lane { display: flex; align-items: center; justify-content: center; }
.drop .side, .scrub .side { background: var(--panel); }
.loop { width: calc(3200% / var(--bars)); height: 21px; background: #5e5e5e; border: 2px solid #8e8e8e; border-left: 0; display: flex; justify-content: space-between; align-items: center; color: #929292; }
.loop svg { width: 16px; height: 18px; }
.mark { position: absolute; left: 72.55%; bottom: 0; width: 14px; height: 10px; color: #00a5b8; }
.time-row { height: 39px; position: relative; }
.mark.foot { left: 68.1%; top: 0; bottom: auto; }
.endline { position: absolute; left: calc((100% - 234px) * .5474); top: 0; bottom: 0; width: 2px; background: #909090; }
.zoomlabel { position: absolute; right: 6px; bottom: 0; font-size: 32px; line-height: 32px; color: #808080; }

.c-teal { --c: #00bfaf; } .c-green { --c: #3dc300; } .c-cyan { --c: #19e9ff; } .c-yellow { --c: #f7f47c; }
.c-ochre { --c: #cb9825; } .c-lime { --c: #bffb00; } .c-mint { --c: #25ffa8; } .c-leaf { --c: #87ff67; }
.thead { width: 220px; flex: none; position: relative; background: var(--c); color: rgba(0, 0, 0, .72); display: flex; align-items: flex-start; gap: 5px; padding: 3px 3px; line-height: 27px; white-space: nowrap; overflow: hidden; font-weight: 600; }
.fold { width: 25px; height: 25px; flex: none; border: 2px solid currentColor; border-radius: 50%; }
.fold svg { width: 21px; height: 21px; display: block; }
.rail { width: 8px; flex: none; margin: -4px 0; background: var(--c); position: relative; z-index: 1; }
.rail.last { margin-bottom: 0; }
.rail + .thead { width: 210px; margin-left: 2px; }
.corner { position: absolute; left: 3px; bottom: 5px; width: 24px; height: 24px; }
.stub { width: 7px; flex: none; margin-left: 3px; background: linear-gradient(90deg, transparent 5px, #111 5px) 0 3px / 100% 25px no-repeat, var(--panel); }
.group .stub { background: linear-gradient(90deg, transparent 5px, #111 5px) 0 3px / 100% 25px no-repeat, linear-gradient(90deg, transparent 5px, #111 5px) 0 35px / 100% 25px no-repeat, var(--panel); }
.big .stub { background: repeating-linear-gradient(var(--panel) 0 3px, transparent 3px 28px, var(--panel) 28px 32px), linear-gradient(90deg, var(--panel) 5px, #111 5px); }
.selected .lane { background: rgba(255, 255, 255, .06); }
.cursor { position: absolute; left: 72.7%; top: 0; bottom: 0; width: 2px; background: #3f9c90; }

.clip { position: absolute; top: 0; bottom: 0; left: calc((var(--a) - 1) * 100% / var(--bars)); width: calc((var(--b) - var(--a)) * 100% / var(--bars)); background: var(--c); border-top: 2px solid rgba(0, 0, 0, .45); overflow: hidden; }
.clip + .clip { border-left: 2px solid rgba(0, 0, 0, .42); }
.small .clip { border-bottom: 2px solid rgba(0, 0, 0, .45); }
.clip p { height: 30px; padding: 5px 0 0 3px; border-bottom: 2px solid rgba(0, 0, 0, .45); color: rgba(0, 0, 0, .74); font-weight: 400; white-space: nowrap; overflow: hidden; }
.clip + .clip p { padding-left: 2px; }
.small .clip p { border: 0; padding-top: 4px; }
.wave { position: absolute; left: 0; top: 32px; width: 100%; height: 128px; }
.wave.ticks { top: 0; height: 31px; }
.stripes { width: 100%; height: 31px; display: block; }
.ghost { position: absolute; left: 0; top: 33px; width: calc(3470% / var(--bars)); height: 42px; background: linear-gradient(transparent 15px, transparent 15px) , repeating-linear-gradient(rgba(0, 0, 0, .13) 0 9px, rgba(0, 0, 0, .05) 9px 11px); }
.speed { display: flex; align-items: flex-start; gap: 6px; padding: 8px 11px 0 4px; }
.speed .box { width: 28px; }
.grow { flex: 1; }

/* shared controls */
.box, .sel, .num { height: 24px; border: 2px solid #111; background: #202020; line-height: 20px; text-align: center; min-width: 0; }
.box { display: flex; align-items: center; justify-content: center; white-space: nowrap; }
.box svg { width: 20px; height: 20px; flex: none; }
.box.on { background: var(--orange); color: #1d1d1d; }
.box.mute { color: #6e6e6e; background: #262626; }
.box.gray { background: #777; color: #3a3a3a; }
.caret { border: solid transparent; border-width: 10px 6px 0; border-top-color: currentColor; flex: none; }
.sel { display: block; position: relative; }
.sel select { padding-left: 4px; display: block; line-height: 20px; }
.tb-sel.sel select { padding: 2px 0 0 8px; line-height: 30px; }
.sel::after { content: ""; position: absolute; right: 4px; top: 5px; border: solid transparent; border-width: 10px 6px 0; border-top-color: currentColor; pointer-events: none; }
.sel.mute { color: #6e6e6e; background: #2e2e2e; }
.num { width: 100%; background-color: #2d2d2d; }
.num.plain { background: var(--panel); }
.p100 { background: #007787; }
.p80 { background: linear-gradient(90deg, #007787 80%, #202020 80%); }
.p86 { background: linear-gradient(90deg, #007787 86%, #202020 86%); }
.p30 { background: linear-gradient(90deg, #007787 30%, #202020 30%); }
.slide { background: linear-gradient(to top right, transparent 50%, var(--cyan) 50%) 100% 0 / 13px 50% no-repeat, linear-gradient(to bottom right, transparent 50%, var(--cyan) 50%) 100% 100% / 13px 50% no-repeat, #202020; }
.slide { background: linear-gradient(to bottom right, transparent 50%, var(--cyan) 50%) 100% 0 / 13px 50% no-repeat, linear-gradient(to top right, transparent 50%, var(--cyan) 50%) 100% 100% / 13px 50% no-repeat, #202020; }
.slide-off.plain { background: linear-gradient(to bottom right, transparent 50%, #1c1c1c 50%) 100% 0 / 13px 50% no-repeat, linear-gradient(to top right, transparent 50%, #1c1c1c 50%) 100% 100% / 13px 50% no-repeat, var(--panel); }
.w-60 { width: 64px; flex: none; }
.dial { position: relative; display: block; width: 50px; height: 46px; flex: none; }
.dial svg { display: block; width: 100%; height: 100%; overflow: visible; }
.dial input { position: absolute; inset: 0; width: 100%; height: 100%; opacity: 0; }
.knob { display: flex; flex-direction: column; align-items: center; white-space: nowrap; }
.large .dial { width: 68px; height: 66px; margin-top: 4px; }
.mini { display: grid; grid-template-columns: 26px auto; justify-content: start; align-content: start; grid-template-rows: 24px 48px; align-items: center; white-space: nowrap; padding-top: 2px; }
.mini > span:first-child { grid-column: 1 / 3; }
.mini .dial { width: 36px; height: 36px; align-self: start; margin-top: 3px; }
.mini > span:last-child { align-self: end; padding-bottom: 1px; position: relative; }
.screen { background: #181818; color: #8f8f8f; border-radius: 3px; }
.panel { background: var(--panel); border-radius: 3px; }

/* device strip */
.devices { flex: none; height: 350px; margin-top: 13px; display: flex; }
.dhead { height: 32px; background: var(--head); display: flex; align-items: center; gap: 8px; padding: 0 6px; flex: none; font-weight: 600; }
.dhead h2 { flex: 1; padding-top: 1px; }
.device, .info { background: var(--panel); border-radius: 6px; overflow: hidden; flex: none; display: flex; flex-direction: column; }
.power { width: 24px; height: 24px; border-radius: 50%; background: var(--orange); border: 2px solid #1a1a1a; flex: none; }
.sq { width: 26px; height: 24px; background: #1a1a1a; border: 2px solid #111; }
.sq svg { display: block; width: 22px; height: 20px; }
.info { width: 138px; border-radius: 0 6px 6px 0; }
.info p { line-height: 28px; margin-right: 32px; direction: rtl; white-space: nowrap; }
.info p:first-of-type { padding-top: 5px; }
.info .l2 { margin-top: 56px; width: 16px; }
.info .l2 + p { width: 26px; }
.info p:last-child { width: 68px; }
.dots { width: 6px; margin: 84px 6px 71px 4px; background: repeating-linear-gradient(#1c1c1c 0 4px, transparent 4px 9px); }
.gap { width: 17px; flex: none; background: repeating-linear-gradient(#1c1c1c 0 4px, transparent 4px 9px) 4px 84px / 3px 196px no-repeat, repeating-linear-gradient(#1c1c1c 0 4px, transparent 4px 9px) 9px 84px / 3px 196px no-repeat; }
.meter { width: 17px; flex: none; background: linear-gradient(#1a1a1a 21px, transparent 21px 24px, #1a1a1a 24px) 4px 75px / 4px 200px no-repeat, linear-gradient(#1a1a1a 21px, transparent 21px 24px, #1a1a1a 24px) 9px 75px / 4px 200px no-repeat; }

.arp { width: 678px; }
.arp-body { display: flex; padding-left: 8px; flex: 1; }
.arp-main { width: 410px; padding-top: 7px; }
.arp-screen { height: 173px; padding: 9px 10px; display: grid; grid-template-columns: 50px 207px 115px; gap: 10px 9px; grid-template-rows: 24px 120px; align-items: center; }
.arp-screen .sel.hot { background: var(--orange); border: 0; color: #1d1d1d; height: 24px; }
.hold { height: 24px; border: 2px solid var(--orange); color: var(--orange); font-weight: 600; }
.steps { grid-column: 1 / 3; width: 266px; height: 120px; border: 2px solid #444; }
.arp-side { align-self: start; display: flex; flex-direction: column; line-height: 24px; padding-top: 4px; }
.arp-side b { color: var(--orange); padding-left: 4px; }
.arp-side .mt { margin-top: 18px; }
.arp-side .clear { border: 0; background: none; color: var(--orange); height: 24px; width: 112px; }
.sel.clear::after { border-width: 6px 5px 0; top: 10px; }
.arp-knobs { display: grid; grid-template-columns: 42px 18px 85px 108px 70px 82px; align-items: start; padding-top: 12px; }
.stack { display: grid; gap: 6px; padding: 31px 0 0 4px; width: 39px; }
.dash { height: 2px; background: #252525; margin: 57px 4px 0 4px; }
.low { padding-top: 14px; }
.arp-right { width: 253px; margin-left: 7px; display: grid; grid-template-columns: 127px 126px; grid-template-rows: 249px 62px; border-left: 2px solid #252525; padding: 0; margin-top: 7px; margin-bottom: 8px; height: 303px; }
.arp-col { display: flex; flex-direction: column; padding: 0 10px 0 8px; }
.line-r { border-right: 2px solid #252525; }
.arp-col .sel, .arp-col .box, .arp-col .num { margin-top: 2px; flex: none; }
.arp-col .sel select { padding-left: 2px; }
.dotted::after { content: ""; float: right; width: 14px; height: 14px; border-radius: 50%; background: #1d1d1d; margin-top: 3px; }
.interval { margin-top: 13px; }
.rep { margin-top: 44px; }
.sp { margin-top: 13px; }
.arp-col .sp2 { margin-top: 11px; }
.arp-scale { grid-column: 1 / 3; display: flex; gap: 9px; padding: 9px 0 0 0; margin: 0 8px; border-top: 2px solid #252525; }
.arp-scale .sel { margin-top: 2px; }
.arp-scale .sel select { padding-left: 2px; }
.w-75 { width: 75px; }
.w-150 { width: 149px; }

.analog { width: 1322px; background: var(--head); }
.aas { color: #1f1f1f; font-weight: 600; }
.an-grid { padding: 0 4px; display: grid; gap: 4px; grid-template-columns: 152px 322px 320px 262px 108px 130px; grid-template-rows: 76px 154px 76px; }
.osc { grid-column: 1 / 3; display: flex; }
.fil, .amp { display: flex; }
.noise { grid-column: 1; }
.an-screen { grid-column: 2 / 5; display: flex; }
.lfo { grid-area: 1 / 5 / 4 / 6; }
.vol { grid-area: 1 / 6 / 4 / 7; }
.lit { background: none; }
.pair { display: grid; gap: 6px; padding: 11px 0 0 6px; align-content: start; align-items: center; white-space: nowrap; }
.w-osc { grid-template-columns: 56px 74px; }
.w-fil { grid-template-columns: 46px 72px; padding-left: 6px; }
.w-fil .sel select { padding-left: 2px; }
.w-fil .sel::after { right: 3px; }
.w-fil .r { justify-self: end; }
.w-amp { grid-template-columns: 60px; }
.w-lfo { grid-template-columns: 53px 32px; }
.w-vol { grid-template-columns: 40px 73px; padding-left: 6px; gap: 6px 4px; }
.shape { padding: 4px 0 0 14px; width: 82px; }
.shapebtn { width: 58px; margin-top: 4px; gap: 7px; }
.shapebtn .sqw { width: 28px; height: 18px; }
.k1 { margin-left: 7px; width: 74px; }
.k2 { width: 89px; }
.osc .mini { padding-left: 0; }
.osc .mini .dial { margin-left: 5px; }
.osc .mini { grid-template-columns: 32px auto; }
.k4 { margin-left: 24px; width: 83px; }
.k6 { margin-left: 17px; width: 82px; }
.k6.mini { grid-template-columns: 32px auto; }
.k6 .dial { margin-left: 5px; }
.color.mini { padding: 17px 0 0 36px; grid-template-rows: 24px 44px; }
.rates { padding: 17px 0 0 18px; display: grid; gap: 6px; }
.rates .mini { padding-top: 0; grid-template-rows: 24px 50px; }
.lfo .pair:last-child { padding-top: 9px; }
.k8 { padding-left: 31px; }
.v1 { padding-top: 15px; }
.v2 { padding-top: 19px; gap: 2px 4px; }
.v3 { padding-top: 19px; gap: 2px 4px; }
.v3 .legato { margin-top: 4px; }
.env { width: 340px; padding-top: 4px; }
.slope { display: flex; align-items: center; padding-left: 10px; height: 24px; gap: 6px; white-space: nowrap; }
.slope span { width: 50px; }
.lin { width: 43px; height: 24px; border: 2px solid var(--cyan); color: var(--cyan); }
.exp { background: var(--cyan); color: #181818; margin-right: 2px; }
.slope label { display: flex; gap: 6px; margin-right: 1px; }
.slope input { appearance: none; width: 17px; height: 17px; border: 2px solid var(--cyan); }
.envsvg { display: block; width: 330px; height: 122px; margin-top: 2px; }
.params { flex: 1; display: grid; grid-template-columns: repeat(7, 1fr); grid-auto-rows: 24px; line-height: 24px; padding-top: 4px; white-space: nowrap; }
.params b { color: var(--cyan); padding-left: 4px; }
.params b.o { color: var(--orange); }
.params b.g { color: #808080; }
.full { grid-column: 1 / 8; }
.rule3 { grid-column: span 3; display: flex; align-items: center; gap: 5px; padding-right: 10px; }
.rule3::after { content: ""; flex: 1; height: 2px; margin-top: 8px; background: #3a3a3a; }
.dd::after { content: ""; float: right; margin: 10px 6px 0 0; border: solid transparent; border-width: 6px 5px 0; border-top-color: currentColor; }

.autof { width: 786px; }
.af-grid { display: grid; grid-template-columns: 36px 102px 383px 107px 158px; padding: 8px 0; height: 318px; }
.af-side { display: flex; flex-direction: column; align-items: center; border-right: 2px solid #252525; padding-bottom: 2px; }
.vert { writing-mode: vertical-rl; transform: rotate(180deg); margin-top: auto; }
.led { width: 14px; height: 14px; border-radius: 50%; background: #242424; margin-top: 8px; }
.kcol { display: flex; flex-direction: column; align-items: center; border-right: 2px solid #252525; }
.kcol .knob + .knob { margin-top: 7px; }
.pointer { margin: 16px 0 2px; border: solid transparent; border-width: 8px 7px 0; border-top-color: #111; }
.t4 { margin-bottom: 4px; }
.af-mid { padding: 1px 0 0 11px; }
.curve { width: 372px; height: 199px; display: block; background: #181818; border-radius: 3px; }
.af-btns { display: flex; gap: 6px; margin-top: 7px; }
.af-btns .box { width: 35px; }
.af-btns .box svg { width: 30px; }
.af-btns .osr { width: 78px; margin: 0 3px; }
.quant { display: grid; grid-template-columns: 112px repeat(5, 1fr); gap: 6px 5px; margin-top: 15px; }
.lcol { display: grid; grid-template-columns: 96px 54px; grid-template-rows: 20px 86px 86px 86px; row-gap: 7px; }
.lt { grid-column: 1 / 3; padding-left: 11px; }
.lr { display: flex; flex-direction: column; gap: 6px; }
.lr.low { padding-top: 20px; align-items: flex-end; }
.low .box { width: 35px; }
.low .box svg { width: 20px; }
.box.wv svg { width: 28px; }
.wv { gap: 4px; }

.echo { width: 955px; background: var(--head); }
.tabs { display: flex; gap: 4px; align-self: flex-end; margin-right: auto; padding-left: 0; }
.echo .dhead h2 { flex: 0 0 278px; }
.tab { height: 24px; padding: 0 12px; background: #3b3b3b; border-radius: 4px 4px 0 0; margin-bottom: 4px; }
.sel-tab { background: #181818; color: #8f8f8f; height: 28px; margin-bottom: 0; padding: 0 12px 4px; }
.echo-grid { display: grid; grid-template-columns: 217px 1fr 205px; gap: 4px; padding: 0 4px 4px; height: 318px; }
.e-left { display: grid; grid-template-columns: 87px 32px 87px; padding: 4px 5px; }
.ecol { display: flex; flex-direction: column; }
.tri3 { display: grid; gap: 6px; margin: 25px 0 23px; }
.tight select { padding-left: 2px; }
.tight::after { right: 2px; }
.emid { display: flex; flex-direction: column; align-items: center; }
.vl { width: 2px; background: #252525; }
.vl.a { height: 32px; }
.vl.b { height: 134px; margin-top: 4px; }
.chain { height: 22px; width: 34px; margin-top: 4px; }
.emid .box { flex: none; }
.emid .box:not(.chain) { width: 28px; margin-bottom: 6px; }
.emid .d1 { margin-top: 37px; }
.e-screen { display: flex; flex-direction: column; min-width: 0; }
.arcs { width: 100%; height: 164px; border-bottom: 2px solid #444; display: block; }
.eq { width: 100%; height: 112px; border-bottom: 2px solid #444; display: block; }
.e-foot { display: flex; align-items: center; flex: 1; padding: 0 8px 0 10px; gap: 7px; white-space: nowrap; }
.e-foot b { color: var(--cyan); }
.up { width: 14px; height: 14px; }
.cy { width: 17px; height: 17px; background: var(--cyan); margin-left: 4px; }
.m { margin-left: 14px; }
.e-right { display: grid; grid-template-columns: 101px 1fr; padding: 4px 0 4px 4px; }
.rcol { display: flex; flex-direction: column; }
.rcol .post { margin-top: 26px; }
.dec { margin: 7px 0 2px; }
.rcol .modes { margin: 29px 0 0; }
.rcol2 { display: flex; flex-direction: column; gap: 22px; }
.rest { flex: 1; }

/* bottom bar */
.bottom { flex: none; height: 25px; margin-top: 17px; display: flex; overflow: hidden; }
.hint { flex: 0 0 83.6%; background: var(--panel); border-radius: 0 4px 0 0; padding-top: 8px; text-indent: -52px; }
.mini-panel { flex: 1; margin: 0 17px; background: var(--panel); border-radius: 4px 4px 0 0; }
.mini-panel svg { width: 34px; height: 26px; margin-top: 5px; border-right: 2px solid #252525; display: block; }
.chainbar { width: 228px; flex: none; display: flex; gap: 12px; background: var(--panel); line-height: 36px; white-space: nowrap; font-weight: 600; }
.up-tab { width: 36px; flex: none; background: var(--orange); color: #111; padding: 8px 11px 0; }
.up-tab svg { width: 14px; height: 14px; display: block; }
.thumbs { flex: 1; height: 30px; border: 3px solid #8e8e8e; border-right: 0; border-radius: 6px 0 0; background: #222; display: flex; gap: 4px; padding: 4px; overflow: hidden; }
.thumbs i { width: 18px; flex: none; height: 22px; background: linear-gradient(var(--orange) 3px, #3a3a3a 3px); }
```

FILE: script.js
```js
const BARS = 58.46;
const LANE = 3590;
const BAR = LANE / BARS;
const rect = (x, y, w, h, fill) => `<rect x="${x.toFixed(1)}" y="${y}" width="${w.toFixed(1)}" height="${h}" fill="${fill}"/>`;
const $ = (id) => document.getElementById(id);

/* rulers */
for (let b = 1; b <= 59; b += 2) $('bars').insertAdjacentHTML('beforeend', `<span>${b < 59 ? b : ''}</span>`);
for (let s = 0; s <= 115; s += 5) {
  $('times').insertAdjacentHTML('beforeend', `<span>${Math.floor(s / 60)}:${String(s % 60).padStart(2, '0')}</span>`);
}

/* background grid */
function shades(light, dark, h, to) {
  let out = '';
  for (let b = 1, n = 0; b < to; b += 4, n++) {
    out += rect((b - 1) * BAR, 0, (Math.min(b + 4, to) - b) * BAR, h, n % 2 ? light : dark);
  }
  return out;
}
function lines(full, half, h, to) {
  let out = '';
  for (let n = 1; 1 + n / 2 < to; n++) out += rect(n * BAR / 2, 0, 2, h, n % 2 ? half : full);
  return out;
}
const grid = $('grid');
grid.setAttribute('viewBox', `0 0 ${LANE} 100`);
grid.innerHTML = `<g shape-rendering="crispEdges">${shades('#373737', '#323232', 100, BARS + 1)}${lines('#252525', '#2b2b2b', 100, BARS + 1)}</g>`;

/* folded group lanes: one colour per thin row */
const STRIPES = {
  harmony: ['', '#00bfaf', '#1b7a70', '#1b7a70', '#00bfaf', '', '#00bfaf', '#168078', '#8f7f2f', '#fff034', '', '#ffa529', '#b06c30', '#1e8030', '#1aff2f'],
  interference: ['', '#19e9ff', '#1b7a85', '#1aa0b0', '#2bb030', '#1c7a2a', '#8f9ffc', '#10507c', '#1568a0', '#187ab4', '#10507c', '#fff480', '#3f6a20', '#2e9a10', '#20b080', '#2e7a5a'],
  death: ['', '#f7f47c', '#f7f47c', '#c5c070', '#5a4a30', '#cb9825', '#cb9825', '#7d6431', '#7d6431', '#cb9825', '#cb9825', '#5a4a30', '#a87e2a', '#cb9825', '#cb9825'],
};
document.querySelectorAll('.stripes').forEach((svg) => {
  const name = svg.dataset.stripes;
  const end = 32 * BAR;
  let out = STRIPES[name].map((c, i) => (c ? rect(0, i, end, 1, c) : '')).join('');
  out += shades('none', 'rgba(0,0,0,.1)', 17, 33) + lines('rgba(0,0,0,.42)', 'rgba(0,0,0,.28)', 17, 33);
  if (name === 'harmony') {
    out += rect(1993, 1, 381, 1, '#00bfaf') + rect(1993, 2, 381, 1, '#1b7a70');
    out += rect(end, 6, LANE - end, 1, '#00bfaf') + rect(end, 7, LANE - end, 1, '#1b7a70');
  }
  svg.setAttribute('viewBox', `0 0 ${LANE} 17`);
  svg.setAttribute('preserveAspectRatio', 'none');
  svg.innerHTML = `<g shape-rendering="crispEdges">${out}</g>`;
});

/* waveforms: [position, peak, half width] */
const place = (list, k, o, ka) => list.map(([x, a, w = 5]) => [x * k + o, a * ka, w * k + 2]);
const OPERATOR = [
  ...place([[22, 38, 7], [30, 25, 7], [47, 42, 4], [56, 35, 5], [71, 30, 5], [141, 20], [152, 25], [202, 33, 6], [212, 18, 8], [317, 38, 4], [330, 40, 4], [342, 5], [391, 25, 5], [398, 10], [409, 15, 4], [426, 12, 4], [486, 12, 4], [519, 22, 4], [534, 27, 5], [614, 38, 8], [626, 25, 5], [663, 42, 4], [767, 33, 6], [776, 45, 7], [813, 14, 7], [851, 25, 4], [865, 17, 9], [890, 3, 9], [962, 28, 7], [968, 22, 6], [979, 14, 9], [1258, 4, 6], [1272, 3, 6], [1350, 20, 8], [1358, 40, 7], [1365, 20, 6], [1465, 3, 9], [1523, 35, 6], [1533, 20, 8]], .6531, -11.3, .44),
  ...place([[90, 28], [98, 18], [105, 28], [112, 22], [121, 27], [132, 18], [172, 14], [178, 22], [187, 28], [194, 22], [203, 22], [254, 20], [262, 15], [270, 18], [279, 22], [283, 24], [291, 35], [301, 9], [337, 22], [349, 24], [359, 15], [363, 18], [371, 33], [388, 33], [420, 20], [429, 25], [437, 10], [495, 3], [505, 3], [546, 26, 3], [577, 22], [585, 22], [590, 18], [601, 40], [608, 14], [617, 24], [633, 20], [700, 3], [716, 3], [820, 14], [928, 26], [935, 30], [943, 12], [955, 4], [995, 14], [1002, 22], [1008, 34], [1018, 14], [1030, 4], [1086, 14], [1091, 12], [1100, 28], [1159, 18], [1168, 24], [1176, 40], [1184, 22], [1192, 32], [1195, 30], [1204, 32], [1250, 2], [1320, 15, 4]].map(([x, a, w = 4]) => [x, a, w]), .7481, 975.5, .6),
];
const BOUNCED_L = [
  ...place([[18, 100], [25, 90], [40, 75], [47, 85], [60, 90], [70, 40], [80, 100], [85, 90], [98, 100], [108, 90], [120, 60], [128, 100], [168, 95], [180, 75], [190, 90], [230, 100], [242, 65], [267, 80], [278, 95], [290, 40], [330, 100], [338, 95], [347, 50], [360, 30], [390, 65], [405, 55], [412, 60], [420, 35], [440, 80], [455, 80], [470, 65], [500, 60], [515, 85], [519, 95], [528, 100], [560, 100], [577, 90], [590, 90], [621, 75], [647, 100], [657, 70], [688, 60], [706, 90], [717, 70], [733, 60], [748, 60], [780, 50], [793, 65], [815, 100], [820, 90], [830, 40], [875, 90], [880, 95], [890, 55], [1140, 40], [1152, 90], [1200, 60], [1209, 100], [1216, 50], [1287, 100], [1295, 80], [1303, 50], [1347, 60], [1355, 75], [1365, 100], [1382, 95], [1390, 60], [1407, 90], [1430, 80], [1445, 100], [1455, 100], [1465, 90], [1475, 90], [1505, 70], [1515, 95], [1525, 90], [1538, 90], [1552, 95], [1562, 90]], .772, -11.3, .34),
  ...place([[305, 40], [315, 50], [322, 45], [335, 50], [342, 40], [350, 52], [357, 45], [368, 55], [385, 50], [398, 45], [408, 50], [420, 45], [428, 55], [436, 48], [445, 40], [478, 40], [490, 42], [500, 15], [546, 48], [577, 45], [585, 50], [592, 42], [601, 52], [610, 40], [618, 50], [633, 52], [640, 45], [650, 40], [661, 50], [675, 30], [695, 35], [710, 12], [820, 38], [882, 30], [928, 55], [936, 50], [944, 25], [958, 10], [990, 55], [997, 50], [1003, 55], [1010, 55], [1020, 25], [1058, 35], [1065, 50], [1072, 55], [1085, 30], [1093, 28], [1101, 50], [1112, 15], [1160, 55], [1168, 50], [1177, 55], [1187, 50], [1195, 55], [1204, 55], [1225, 30], [1235, 50], [1243, 48], [1252, 55], [1265, 50], [1320, 25]], .7481, 975.5, .6),
];
const BOUNCED_R = [
  ...place([[18, 80], [25, 95], [32, 60], [42, 90], [48, 80], [58, 60], [120, 60], [130, 70], [170, 85], [177, 100], [185, 95], [200, 50], [207, 40], [218, 50], [267, 85], [278, 95], [290, 55], [330, 95], [338, 60], [345, 50], [360, 30], [410, 50], [427, 70], [440, 85], [453, 75], [490, 30], [505, 45], [517, 85], [530, 95], [560, 95], [570, 30], [600, 50], [612, 70], [647, 95], [657, 70], [680, 70], [688, 60], [717, 75], [733, 55], [810, 90], [818, 100], [828, 50], [847, 40], [880, 75], [893, 60], [975, 80], [985, 55], [1140, 45], [1152, 95], [1287, 100], [1298, 85], [1310, 60], [1367, 95], [1385, 80], [1390, 75], [1407, 95], [1430, 40], [1450, 95], [1460, 80], [1473, 90], [1525, 70], [1540, 75], [1555, 70], [1565, 85]], .772, -11.3, .34),
  ...place([[305, 50], [315, 45], [337, 40], [345, 50], [352, 45], [360, 50], [371, 55], [388, 45], [420, 50], [428, 45], [437, 40], [446, 35], [453, 45], [467, 15], [500, 45], [508, 40], [515, 48], [530, 35], [545, 45], [553, 40], [578, 48], [586, 50], [592, 45], [601, 55], [618, 50], [634, 50], [710, 30], [743, 30], [752, 40], [765, 30], [780, 25], [797, 20], [812, 35], [820, 38], [928, 45], [935, 50], [945, 28], [985, 25], [993, 35], [1000, 50], [1007, 55], [1020, 20], [1087, 35], [1095, 30], [1102, 45], [1162, 50], [1170, 48], [1178, 55], [1186, 45], [1195, 50], [1204, 50], [1250, 30], [1265, 35], [1320, 25]], .7481, 975.5, .6),
];
const noise = (x) => Math.abs(Math.sin(x * 12.9898) * 43758.5453) % 1;
function wave(list, c, end, base) {
  let d = '';
  for (let x = 0; x < end; x += 2) {
    let a = 0;
    for (const [px, pa, w] of list) {
      const k = 1 - Math.abs(x + 1 - px) / w;
      if (k > 0) a = Math.max(a, pa * Math.min(1, k * 1.1));
    }
    const floor = base ? base + 2 * Math.abs(Math.sin(x / 70)) * Math.abs(Math.sin(x / 190)) : 1;
    const up = Math.min(32, Math.max(floor, a * (.85 + .2 * noise(x))));
    const dn = Math.min(32, Math.max(floor, a * (.8 + .25 * noise(x + 7))));
    d += `M${x} ${(c - up).toFixed(1)}h2v${(up + dn).toFixed(1)}h-2z`;
  }
  return `<path d="${d}" fill="#1b2722"/>`;
}
const WAVES = {
  operator: (end) => wave(OPERATOR, 32, end, 0) + wave(OPERATOR, 95, end, 0),
  bounced: (end) => `<path d="M80 0h80v128H80l30-64z" fill="rgba(0,0,0,.14)"/><path d="M146 0h14v128h-34l6-60z" fill="rgba(0,0,0,.16)"/>` + wave(BOUNCED_L, 32, end, 5) + wave(BOUNCED_R, 95, end, 5),
  pad: (end) => {
    const swells = [[0, 60, .7], [181, 307, .15], [430, 550, .6], [671, 800, .6], [925, 1045, .6], [1233, 1292, .6], [1410, 1475, .6], [1656, 1782, .6], [1902, 2020, .6]];
    const ring = (x, y, s = 10) => `<rect x="${x}" y="${y}" width="${s}" height="${s}" fill="none" stroke="#000" stroke-width="2"/>`;
    return [32, 95].map((c) => swells.map(([a, b, o]) => `<ellipse cx="${(a + b) / 2}" cy="${c}" rx="${(b - a) / 2}" ry="3" fill="#221e12" opacity="${o}"/>`).join('') + rect(0, c - 1, end, 2, '#221e12')).join('')
      + ring(48, 2) + ring(48, 115) + ring(1953, 2) + ring(1953, 115);
  },
  pulse: (end) => [32, 95].map((c) => {
    let out = rect(0, c - 1, end, 2, '#221e12');
    for (let x = 41; x < end; x += 42.9) {
      let s = 0;
      for (let p = 235; p < 2000; p += 318) s = Math.max(s, Math.exp(-(((x - p) / 85) ** 2)));
      out += `<ellipse cx="${x.toFixed(1)}" cy="${c + 1}" rx="${(5 + 9 * s).toFixed(1)}" ry="${(1.5 + 2.5 * s).toFixed(1)}" fill="#221e12"/>`;
      if (s > .2) out += rect(x - 21.5, c - 2, 43, 4, 'rgba(34,30,18,.7)');
    }
    return out;
  }).join(''),
  flat: (end) => rect(0, 31, end, 2, '#221e12') + rect(0, 94, end, 2, '#221e12'),
  ticks: () => [8, 16, 24].map((b) => rect(b * BAR, 1, 2, 6, '#1c2400') + rect(b * BAR, 24, 2, 6, '#1c2400')).join(''),
};
document.querySelectorAll('.wave').forEach((svg) => {
  const bar = Number(svg.dataset.end);
  const ticks = svg.dataset.wave === 'ticks';
  svg.setAttribute('viewBox', `0 0 ${LANE} ${ticks ? 31 : 128}`);
  svg.setAttribute('preserveAspectRatio', 'none');
  const over = ticks ? '' : `<g shape-rendering="crispEdges">${lines('rgba(0,0,0,.32)', 'rgba(0,0,0,.2)', 128, bar)}</g>`;
  svg.innerHTML = over + WAVES[svg.dataset.wave]((bar - 1) * BAR);
});

/* song overview */
const song = ['#3e7a4a', '#6f7f3a', '#8f7f30', '#8a8034', '#3f8078', '#6a8a60', '#2878a0', '#60a050', '#449484', '#957f35', '#957f35', '#60a040'];
$('overview').innerHTML = `<g shape-rendering="crispEdges">${song.map((c, i) => rect(0, i, 1841, 1, c)).join('')}`
  + rect(1867, 0, 358, 1, '#5c5a24') + rect(1875, 0, 36, 1, '#4a7a3a') + rect(1841, 1, 1866, 1, '#27514e')
  + rect(1841, 10, 93, 1, '#735620') + rect(1934, 10, 63, 1, '#574626') + rect(2448, 0, 2, 12, '#c8c8c8') + '</g>';

/* dials */
const polar = (c, r, deg) => {
  const t = deg * Math.PI / 180;
  return [c + r * Math.sin(t), c - r * Math.cos(t)];
};
function arc(c, r, a, b, color, w) {
  if (b - a < 1) return '';
  const [x1, y1] = polar(c, r, a);
  const [x2, y2] = polar(c, r, b);
  return `<path d="M${x1.toFixed(1)} ${y1.toFixed(1)}A${r} ${r} 0 ${b - a > 180 ? 1 : 0} 1 ${x2.toFixed(1)} ${y2.toFixed(1)}" fill="none" stroke="${color}" stroke-width="${w}"/>`;
}
document.querySelectorAll('.dial').forEach((el) => {
  const host = el.parentElement.classList;
  const mini = host.contains('mini');
  const dim = host.contains('dim');
  const size = mini ? 36 : host.contains('large') ? 68 : 50;
  const tall = mini ? 36 : host.contains('large') ? 66 : 46;
  const c = size / 2;
  const r = c - 2;
  const [from, span] = mini ? [-180, 270] : [-144, 288];
  const at = (v) => from + span * v;
  const v = Number(el.dataset.v);
  const o = Number(el.dataset.o || 0);
  const w = size > 60 ? 4 : 3;
  const [nx, ny] = polar(c, r, at(v));
  const track = dim ? '#2a2a2a' : '#141414';
  let out = arc(c, r, from, from + span, track, w) + arc(c, r, at(Math.min(o, v)), at(Math.max(o, v)), dim ? '#808080' : '#00c0d8', w)
    + `<path d="M${c} ${c}L${nx.toFixed(1)} ${ny.toFixed(1)}" stroke="${track}" stroke-width="3"/>`;
  const tri = { cyan: '#00c0d8', dark: '#141414', dim: '#2a2a2a' }[el.dataset.tri];
  if (tri) out += `<path d="M-5 4L4 -6V4z" fill="${tri}"/>`;
  el.innerHTML = `<svg viewBox="0 0 ${size} ${tall}">${out}</svg><input type="range" min="0" max="1" step="any" value="${v}">`;
});

/* frequency displays */
function logGrid(w, h, first, decade) {
  let out = '';
  for (let k = -1; k < 4; k++) {
    for (let n = 1; n < 10; n++) {
      const x = first + decade * (k + Math.log10(n));
      if (x > 0 && x < w) out += rect(x, 0, 2, h, n === 1 ? '#404040' : '#272727');
    }
  }
  return out;
}
const label = (x, y, t) => `<text x="${x}" y="${y}" text-anchor="middle" fill="#8a8a8a">${t}</text>`;
$('afcurve').innerHTML = logGrid(372, 178, 75, 128.6) + [23, 48, 73, 99, 125, 151, 175].map((y) => rect(0, y, 372, 2, y === 99 ? '#444' : '#2c2c2c')).join('')
  + label(75, 194, '100') + label(203, 194, '1k') + label(331, 194, '10k')
  + '<path d="M87 199C110 145 132 118 166 109C196 100 220 100 260 100H372" fill="none" stroke="#00c0d8" stroke-width="3"/>'
  + '<circle cx="120" cy="187" r="10" fill="#181818" stroke="#ffad56" stroke-width="3"/>';
$('eq').innerHTML = logGrid(518, 92, 122, 171) + [38, 73].map((y) => rect(0, y, 518, 2, y === 38 ? '#444' : '#2c2c2c')).join('')
  + label(120, 108, '100') + label(291, 108, '1k') + label(463, 108, '10k')
  + '<path d="M179 112C222 62 262 46 316 46S408 60 446 112" fill="none" stroke="#00c0d8" stroke-width="3"/>'
  + '<circle cx="222" cy="99" r="12" fill="#ffad56"/><circle cx="403" cy="99" r="10" fill="#181818" stroke="#ffad56" stroke-width="4"/>';

/* echo taps: side, half width, height, opacity */
const mid = 259;
const taps = [[-1, 235, 150, 1], [1, 235, 150, 1], [-1, 171, 109, 1], [1, 135, 86, 1], [-1, 110, 71, .7], [1, 94, 61, .6], [-1, 81, 53, .5], [1, 73, 46, .5]];
for (let i = 0, w = 65; i < 9; i++, w *= .9) taps.push([i % 2 ? 1 : -1, w, w * .65, .32 - i * .03], [i % 2 ? -1 : 1, w * .94, w * .6, .32 - i * .03]);
$('arcs').innerHTML = taps.map(([s, w, h, o]) => {
  const r = ((w * w + h * h) / (2 * h)).toFixed(1);
  return `<path d="M${(mid + s * w).toFixed(1)} 164A${r} ${r} 0 0 ${s < 0 ? 1 : 0} ${mid} ${(164 - h).toFixed(1)}" fill="none" stroke="#ffad56" stroke-opacity="${o}" stroke-width="3"/>`;
}).join('') + [[14, 7], [44, 5], [63, 4], [78, 4], [87, 3], [92, 3], [98, 3], [104, 2], [109, 2], [113, 2]].map(([y, s]) => `<ellipse cx="${mid}" cy="${y}" rx="${s > 4 ? 3 : 2}" ry="${s / 2}" fill="#fff"/>`).join('');
```
